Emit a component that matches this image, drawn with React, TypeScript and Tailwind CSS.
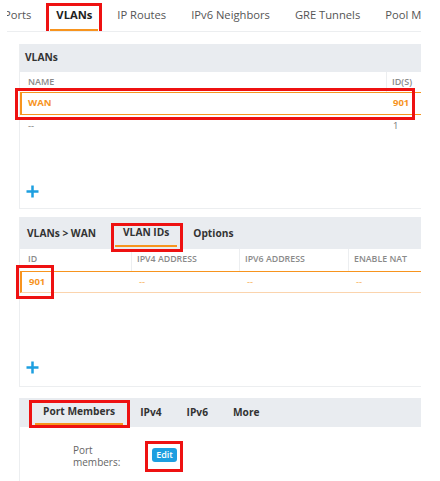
const ORANGE = "border-[#f7941e]";

function RedBox({ className }: { className: string }) {
  return (
    <span
      className={`pointer-events-none absolute border-[3px] border-[#ee1111] ${className}`}
    />
  );
}

function AddButton() {
  return (
    <svg width="13" height="13" viewBox="0 0 13 13" className="block">
      <path d="M6.5 0.5v12M0.5 6.5h12" stroke="#1d9fe0" strokeWidth="2.5" />
    </svg>
  );
}

const topTabs = ["Ports", "VLANs", "IP Routes", "IPv6 Neighbors", "GRE Tunnels", "Pool Members"];

export default function App() {
  return (
    <div
      className="relative h-[481px] w-[440px] overflow-hidden bg-white text-[#333]"
      style={{ fontFamily: '"Open Sans", "Liberation Sans", sans-serif' }}
    >
      <div className="w-[421px] overflow-hidden">
        {/* Top tabs, clipped at the left like the crop */}
        <div className="ml-[7px] h-[32px] overflow-hidden border-b border-[#eceef0]">
          <div className="-ml-[15.5px] flex h-[31px] whitespace-nowrap text-[11.2px]">
            {topTabs.map((t) => {
              const active = t === "VLANs";
              return (
                <div
                  key={t}
                  className={`relative mx-[6.5px] flex items-center px-[6px] pt-[1px] ${
                    active
                      ? "border-b-2 border-[#f7941e] font-bold text-[#222]"
                      : "border-b-2 border-transparent text-[#555]"
                  }`}
                >
                  {t}
                  {active && <RedBox className="-left-[4px] -right-[4px] top-[3px] -bottom-[6px]" />}
                </div>
              );
            })}
          </div>
        </div>

        {/* VLANs panel */}
        <div className="ml-[19px] mt-[12px] w-[402px] border-b border-l border-[#eceef0]">
          <div className="flex h-[28px] items-center bg-[#e9ecf0] pl-[5px] text-[10.2px] font-bold text-[#333]">
            VLANs
          </div>
          <div className="grid h-[20px] grid-cols-[366px_1fr] text-[9px] font-semibold uppercase text-[#8a8a8a]">
            <div className="flex items-center pl-[8px]">Name</div>
            <div className="flex items-center border-l border-[#eceef0] pl-[5px]">ID(S)</div>
          </div>
          <div
            className={`relative grid h-[23px] grid-cols-[366px_1fr] border-b border-l-2 border-t ${ORANGE} text-[9.5px] font-bold text-[#f7941e]`}
          >
            <div className="flex items-center pl-[6px]">WAN</div>
            <div className="flex items-center pl-[5px]">901</div>
            <RedBox className="-left-[7px] right-[6px] -top-[5px] -bottom-[6px]" />
          </div>
          <div className="grid h-[23px] grid-cols-[366px_1fr] text-[9.5px] text-[#777]">
            <div className="flex items-center pl-[8px]">--</div>
            <div className="flex items-center pl-[7px]">1</div>
          </div>
          <div className="flex h-[70px] items-end pb-[10px] pl-[6px]">
            <AddButton />
          </div>
        </div>

        {/* VLAN IDs panel */}
        <div className="ml-[19px] mt-[8px] w-[402px] border-b border-l border-[#eceef0]">
          <div className="flex h-[32px] bg-[#e9ecf0] text-[10.2px] font-bold text-[#333]">
            <div className="flex w-[95px] items-center pl-[7px] pt-[2px]">VLANs &gt; WAN</div>
            <div className="relative flex h-[30px] items-center border-b-2 border-[#f7941e] px-[8px] pt-[4px]">
              VLAN IDs
              <RedBox className="-left-[4px] -right-[6px] top-[6px] -bottom-[7px]" />
            </div>
            <div className="ml-[10px] flex h-[30px] items-center px-[6px] pt-[4px]">Options</div>
          </div>
          <div className="grid h-[22px] grid-cols-[111px_108px_109px_1fr] text-[8.8px] font-semibold uppercase text-[#8a8a8a]">
            <div className="flex items-center pl-[8px]">ID</div>
            <div className="flex items-center border-l border-[#eceef0] pl-[5px]">IPv4 Address</div>
            <div className="flex items-center border-l border-[#eceef0] pl-[5px]">IPv6 Address</div>
            <div className="flex items-center border-l border-[#eceef0] pl-[5px]">Enable NAT</div>
          </div>
          <div className="relative grid h-[22px] grid-cols-[111px_108px_109px_1fr] border-b border-l-2 border-t border-b-[#fbd4ad] border-l-[#f7941e] border-t-[#f7941e] text-[9.5px] text-[#f7a94e]">
            <div className="flex items-center pl-[7px] font-bold text-[#f7941e]">901</div>
            <div className="flex items-center pl-[6px]">--</div>
            <div className="flex items-center pl-[6px]">--</div>
            <div className="flex items-center pl-[6px]">--</div>
            <RedBox className="-left-[6px] -top-[7px] h-[34px] w-[38px]" />
          </div>
          <div className="flex h-[93px] items-end pb-[12px] pl-[6px]">
            <AddButton />
          </div>
        </div>

        {/* Port members panel */}
        <div className="ml-[19px] mt-[11px] h-[100px] w-[402px] border-l border-[#eceef0]">
          <div className="flex h-[29px] bg-[#e9ecf0] pl-[15px] text-[10.2px] font-bold text-[#333]">
            <div className="relative flex h-[27px] items-center border-b-2 border-[#f7941e] px-[8px] pt-[2px]">
              Port Members
              <RedBox className="-left-[6px] -right-[7px] top-[2px] -bottom-[5px]" />
            </div>
            <div className="ml-[10px] flex h-[27px] items-center px-[7px] pt-[2px]">IPv4</div>
            <div className="ml-[11px] flex h-[27px] items-center px-[7px] pt-[2px]">IPv6</div>
            <div className="ml-[11px] flex h-[27px] items-center px-[7px] pt-[2px]">More</div>
          </div>
          <div className="flex items-start pl-[53px] pt-[17px]">
            <div className="w-[79px] text-[10px] leading-[12px] text-[#666]">
              <div>Port</div>
              <div>members:</div>
            </div>
            <div className="relative mt-[4px]">
              <button className="flex h-[14px] w-[25px] items-center justify-center rounded-[3px] bg-[#1d9fe0] text-[9px] font-semibold text-white">
                Edit
              </button>
              <RedBox className="-left-[7px] -right-[6px] -top-[7px] -bottom-[10px]" />
            </div>
          </div>
        </div>
      </div>
    </div>
  );
}
